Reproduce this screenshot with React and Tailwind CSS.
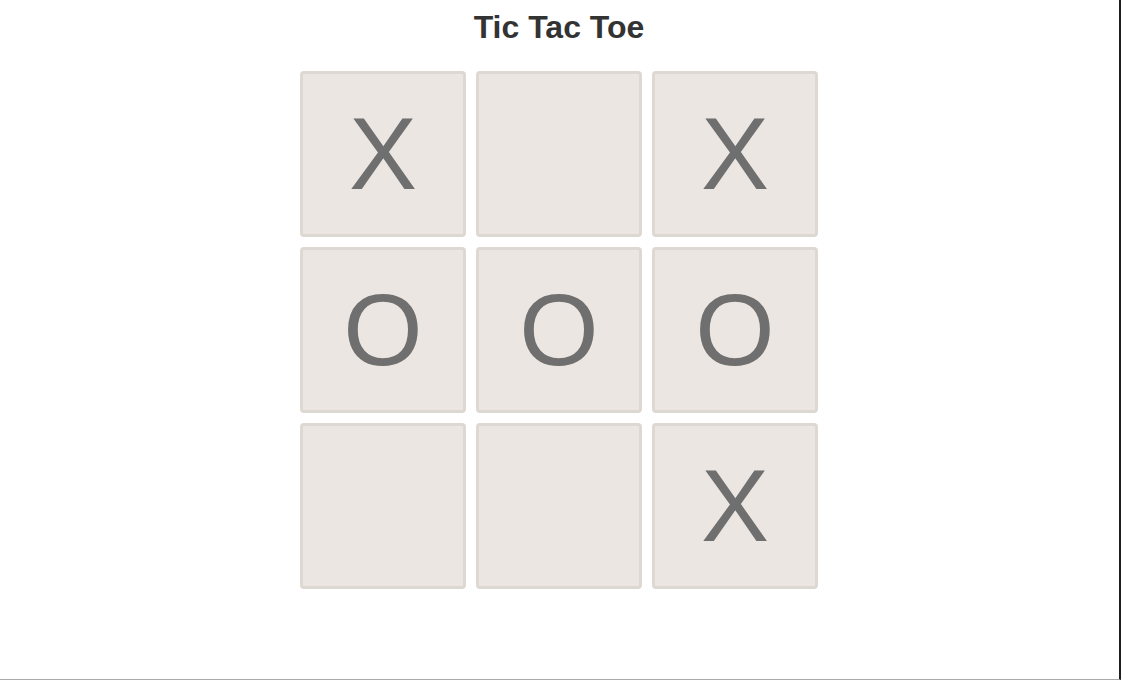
const board = ["X", "", "X", "O", "O", "O", "", "", "X"];

const Square = ({ value }) => (
  <div className="w-[166px] h-[166px] bg-[#ebe6e2] border-[3px] border-[#ddd8d2] rounded-[4px] flex items-center justify-center">
    <span className="text-[102px] leading-none text-[#6f6f6f]">{value}</span>
  </div>
);

export default function App() {
  return (
    <div
      className="h-[680px] w-full bg-white border-r-2 border-r-[#1a1f24] border-b border-b-[#a9a9a9] pr-px flex flex-col items-center"
      style={{ fontFamily: '"Liberation Sans", Arial, sans-serif' }}
    >
      <h1 className="mt-[8px] text-[32px] leading-[38px] font-bold text-[#333333]">
        Tic Tac Toe
      </h1>
      <div className="mt-[25px] grid grid-cols-3 gap-[10px]">
        {board.map((v, i) => (
          <Square key={i} value={v} />
        ))}
      </div>
    </div>
  );
}
